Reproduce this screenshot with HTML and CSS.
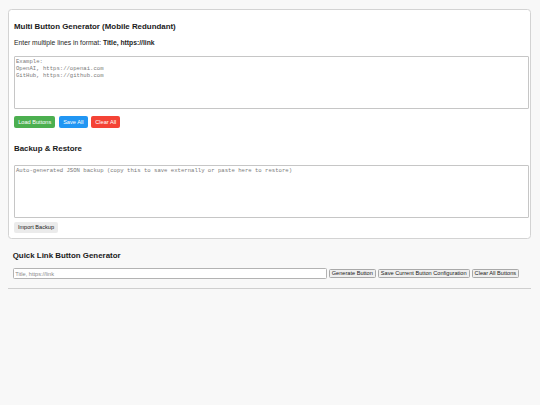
FILE: index.html
```html
<!DOCTYPE html>
<html lang="en">
<head>
<meta charset="utf-8">
<title>Multi Button Generator</title>
<link rel="stylesheet" href="styles.css">
</head>
<body>
<div class="page">
  <section class="card">
    <h3 class="title">Multi Button Generator (Mobile Redundant)</h3>
    <p class="hint">Enter multiple lines in format: <b>Title, https://link</b></p>
    <textarea class="area" placeholder="Example:&#10;OpenAI, https://openai.com&#10;GitHub, https://github.com"></textarea>
    <div class="actions">
      <button class="btn btn-green">Load Buttons</button>
      <button class="btn btn-blue">Save All</button>
      <button class="btn btn-red">Clear All</button>
    </div>
    <h3 class="subtitle">Backup &amp; Restore</h3>
    <textarea class="area" placeholder="Auto-generated JSON backup (copy this to save externally or paste here to restore)"></textarea>
    <div class="restore">
      <button class="btn btn-gray">Import Backup</button>
    </div>
  </section>
  <section class="quick">
    <h3 class="quick-title">Quick Link Button Generator</h3>
    <div class="quick-row">
      <input class="quick-input" type="text" placeholder="Title, https://link">
      <button class="plain-btn">Generate Button</button>
      <button class="plain-btn">Save Current Button Configuration</button>
      <button class="plain-btn">Clear All Buttons</button>
    </div>
  </section>
  <hr class="divider">
</div>
</body>
</html>
```
FILE: styles.css
```css
* {
  box-sizing: border-box;
}

html, body {
  margin: 0;
  background: #f8f8f8;
}

body {
  font-family: "Liberation Sans", Arial, sans-serif;
  color: #1e1e1e;
  font-size: 6.75px;
}

.page {
  padding: 8.5px 9px 0 8px;
}

.card {
  background: #ffffff;
  border: 1px solid #d3d3d3;
  border-radius: 3.5px;
  padding: 0 5px 5px 5px;
}

.title,
.subtitle,
.quick-title {
  font-size: 7.9px;
  line-height: 9px;
  font-weight: bold;
  color: #1a1a1a;
}

.title {
  margin: 12.2px 0 7.9px;
}

.hint {
  margin: 0 0 9.6px;
  line-height: 7.8px;
  font-size: 6.75px;
}

.area {
  display: block;
  width: 515px;
  height: 53px;
  margin: 0;
  padding: 1px;
  border: 1px solid #c6c6c6;
  border-radius: 1px;
  font-family: "Liberation Mono", "Courier New", monospace;
  font-size: 5.625px;
  color: #222;
  background: #fff;
  resize: none;
}

.area::placeholder {
  color: #7a7a7a;
}

.actions {
  display: flex;
  gap: 3.5px;
  margin-top: 7px;
}

.btn {
  height: 12px;
  padding: 0 4.2px;
  border: none;
  border-radius: 2px;
  font-family: "Liberation Sans", Arial, sans-serif;
  font-size: 5.625px;
  color: #fff;
  line-height: 12px;
}

.btn-green {
  background: #4caf50;
}

.btn-blue {
  background: #2196f3;
}

.btn-red {
  background: #f44336;
}

.subtitle {
  margin: 16.4px 0 11.6px;
}

.restore {
  margin-top: 4px;
  display: flex;
}

.btn-gray {
  height: 11px;
  line-height: 11px;
  padding: 0 3.9px;
  background: #ebebeb;
  color: #222;
}

.quick {
  margin-top: 12px;
  padding-left: 4.7px;
}

.quick-title {
  margin: 0 0 8.5px;
}

.quick-row {
  display: flex;
  align-items: center;
  gap: 2px;
  height: 11px;
}

.quick-input {
  width: 314px;
  height: 11px;
  margin: 0;
  padding: 0 1.6px;
  border: 1px solid #b3b3b3;
  border-radius: 1.5px;
  font-family: "Liberation Sans", Arial, sans-serif;
  font-size: 5.625px;
  background: #fff;
}

.quick-input::placeholder {
  color: #8a8a8a;
}

.plain-btn {
  height: 9px;
  margin: 0;
  padding: 0 2px;
  border: 1px solid #a9a9a9;
  border-radius: 1.5px;
  background: #efefef;
  font-family: "Liberation Sans", Arial, sans-serif;
  font-size: 5.625px;
  line-height: 7px;
  color: #1a1a1a;
}

.divider {
  margin: 9px 0 0;
  border: none;
  border-top: 1px solid #cfcfcf;
  height: 0;
}
```
